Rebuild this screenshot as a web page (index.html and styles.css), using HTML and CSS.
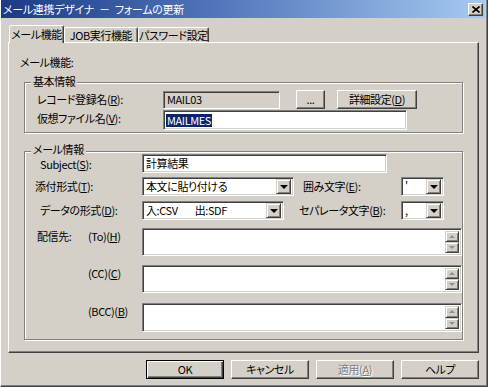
FILE: index.html
```html
<!DOCTYPE html>
<html lang="ja">
<head>
<meta charset="utf-8">
<title>メール連携デザイナ － フォームの更新</title>
<link rel="stylesheet" href="styles.css">
</head>
<body>
<div class="window">
  <div class="titlebar">
    <span class="title">メール連携デザイナ － フォームの更新</span>
    <span class="close"><svg width="8" height="7" viewBox="0 0 8 7"><path d="M0.5 0.5 L7.5 6.5 M7.5 0.5 L0.5 6.5" stroke="#000" stroke-width="1.6"/></svg></span>
  </div>

  <div class="tabs">
    <div class="tab active">メール機能</div>
    <div class="tab t2">JOB実行機能</div>
    <div class="tab t3">パスワード設定</div>
  </div>

  <div class="panel">
    <div class="caption">メール機能:</div>

    <div class="group g1">
      <span class="legend">基本情報</span>
      <div class="row r-rec">
        <span class="label l1">レコード登録名(<u>R</u>):</span>
        <div class="field disabled w-rec">MAIL03</div>
        <button class="btn b-dots">...</button>
        <button class="btn b-detail">詳細設定(<u>D</u>)</button>
      </div>
      <div class="row r-file">
        <span class="label l1">仮想ファイル名(<u>V</u>):</span>
        <div class="field w-file"><span class="sel">MAILMES</span></div>
      </div>
    </div>

    <div class="group g2">
      <span class="legend">メール情報</span>
      <div class="row r-subj">
        <span class="label l2 in3">Subject(<u>S</u>):</span>
        <div class="field w-subj">計算結果</div>
      </div>
      <div class="row r-att">
        <span class="label l2 out2">添付形式(<u>T</u>):</span>
        <div class="select w-att"><span class="val">本文に貼り付ける</span><span class="drop"></span></div>
        <span class="label l-enc">囲み文字(<u>E</u>):</span>
        <div class="select w-small"><span class="val">'</span><span class="drop"></span></div>
      </div>
      <div class="row r-data">
        <span class="label l2 in3">データの形式(<u>D</u>):</span>
        <div class="select w-data"><span class="val">入:CSV<span class="gap">出:SDF</span></span><span class="drop"></span></div>
        <span class="label l-sep">セパレータ文字(<u>B</u>):</span>
        <div class="select w-small"><span class="val">,</span><span class="drop"></span></div>
      </div>
      <div class="row trow ta1">
        <span class="label l-to1">配信先:</span>
        <span class="label l-to2">(To)(<u>H</u>)</span>
        <div class="textarea"><div class="sb"><span class="sbtn up"></span><span class="sbtn down"></span></div></div>
      </div>
      <div class="row trow ta2">
        <span class="label l-to1"></span>
        <span class="label l-to2">(CC)(<u>C</u>)</span>
        <div class="textarea"><div class="sb"><span class="sbtn up"></span><span class="sbtn down"></span></div></div>
      </div>
      <div class="row trow ta3">
        <span class="label l-to1"></span>
        <span class="label l-to2">(BCC)(<u>B</u>)</span>
        <div class="textarea"><div class="sb"><span class="sbtn up"></span><span class="sbtn down"></span></div></div>
      </div>
    </div>
  </div>

  <div class="buttons">
    <button class="btn dlg default">OK</button>
    <button class="btn dlg">キャンセル</button>
    <button class="btn dlg disabled-btn">適用(<u>A</u>)</button>
    <button class="btn dlg">ヘルプ</button>
  </div>
</div>
</body>
</html>
```

FILE: styles.css
```css
* { box-sizing: border-box; margin: 0; padding: 0; }
html, body { width: 488px; height: 387px; overflow: hidden; }
body {
  background: #D4D0C8;
  font-family: "Noto Sans CJK JP", "Noto Sans", sans-serif;
  font-size: 11px;
  line-height: 13px;
  color: #000;
  font-feature-settings: "palt" 1;
  letter-spacing: -0.4px;
}
u { text-decoration: underline; text-underline-offset: 1px; }

.window {
  width: 488px;
  height: 387px;
  display: flex;
  flex-direction: column;
  border-left: 1px solid #fff;
  border-right: 1px solid #404040;
  border-bottom: 1px solid #404040;
  box-shadow: inset -1px -1px 0 #808080;
  padding-right: 2px;
}

.titlebar {
  height: 18px;
  flex: none;
  display: flex;
  align-items: center;
  justify-content: space-between;
  padding: 0 2px;
  background: linear-gradient(to right, #1a3a86 0%, #5276bb 45%, #a6caf0 100%);
  color: #fff;
}
.title { font-size: 11px; line-height: 13px; letter-spacing: -0.3px; word-spacing: 3px; white-space: pre; }
.close {
  width: 15px;
  height: 13px;
  background: #D4D0C8;
  border: 1px solid;
  border-color: #fff #404040 #404040 #fff;
  box-shadow: inset -1px -1px 0 #808080;
  display: flex;
  align-items: center;
  justify-content: center;
}

/* tabs */
.tabs {
  margin-top: 7px;
  margin-left: 8px;
  height: 17px;
  display: flex;
  align-items: flex-end;
  flex: none;
  position: relative;
  z-index: 1;
}
.tab {
  height: 15px;
  border: 1px solid;
  border-bottom: none;
  border-color: #fff #404040 transparent #fff;
  box-shadow: inset -1px 0 0 #808080;
  border-radius: 2px 2px 0 0;
  display: flex;
  align-items: center;
  justify-content: center;
  background: #D4D0C8;
  white-space: nowrap;
  padding-top: 1px;
}
.tab.active { width: 55px; height: 18px; margin-bottom: -1px; padding-top: 0; }
.tab.t2 { width: 74px; }
.tab.t3 { width: 71px; }

.panel {
  margin-left: 7px;
  width: 471px;
  height: 311px;
  flex: none;
  border: 1px solid;
  border-color: #fff #404040 #404040 #fff;
  box-shadow: inset -1px -1px 0 #808080;
}
.caption { margin: 13px 0 0 11px; }

.group {
  position: relative;
  margin-left: 15px;
  width: 439px;
  border: 1px solid #808080;
  box-shadow: inset 1px 1px 0 #fff, 1px 1px 0 #fff;
  padding-left: 12px;
}
.legend {
  position: absolute;
  top: -7px;
  left: 6px;
  padding: 0 2px;
  line-height: 11px;
  background: #D4D0C8;
}
.g2 .legend { top: -8px; }
.g1 { margin-top: 13px; height: 51px; padding-top: 7px; }
.g2 { margin-top: 18px; height: 189px; padding-top: 1px; }

.row { display: flex; align-items: center; }
.label { flex: none; white-space: nowrap; }
.l1 { width: 126px; }
.l2 { width: 105px; }
.in3 { padding-left: 3px; }
.out2 { margin-left: -2px; width: 107px; }

.r-rec { height: 19px; }
.r-file { height: 20px; margin-top: 1px; }
.r-file .label { margin-top: -3px; }
.r-subj { height: 19px; margin-top: 1px; }
.r-subj .label { line-height: 11px; margin-top: 2px; }
.r-att { height: 19px; margin-top: 4px; }
.r-data { height: 19px; margin-top: 5px; }
.trow { align-items: flex-start; }
.ta1 { height: 28px; margin-top: 8px; }
.ta2 { height: 28px; margin-top: 9px; }
.ta3 { height: 29px; margin-top: 10px; }
.trow .label { padding-top: 2px; }
.l-to1 { width: 51px; }
.l-to2 { width: 54px; }

/* sunken fields */
.field, .select, .textarea {
  background: #fff;
  border: 1px solid;
  border-color: #808080 #fff #fff #808080;
  box-shadow: inset 1px 1px 0 #404040, inset -1px -1px 0 #D4D0C8;
  height: 100%;
  flex: none;
}
.field { padding: 0 3px; display: flex; align-items: center; white-space: nowrap; }
.field.disabled { background: #D4D0C8; }
.w-rec { width: 117px; height: 18px; }
.w-file { width: 244px; padding-left: 2px; }
.w-subj { width: 245px; }
.sel { background: #0A246A; color: #fff; padding: 0 1px; line-height: 13px; }

.select { display: flex; align-items: center; padding: 2px; }
.select .val { flex: 1; padding-left: 1px; white-space: nowrap; }
.gap { margin-left: 17px; }
.w-att { width: 152px; }
.w-data { width: 142px; }
.w-small { width: 43px; }
.l-enc { margin-left: 9px; width: 98px; }
.l-sep { margin-left: 15px; width: 102px; }
.drop {
  flex: none;
  width: 15px;
  height: 15px;
  background: #D4D0C8;
  border: 1px solid;
  border-color: #D4D0C8 #404040 #404040 #D4D0C8;
  box-shadow: inset 1px 1px 0 #fff, inset -1px -1px 0 #808080;
  display: flex;
  align-items: center;
  justify-content: center;
}
.drop::after {
  content: "";
  border-top: 4px solid #000;
  border-left: 4px solid transparent;
  border-right: 4px solid transparent;
  margin-top: 1px;
}

.textarea { width: 320px; display: flex; justify-content: flex-end; padding: 2px; }
.sb { width: 14px; display: flex; flex-direction: column; }
.sbtn {
  flex: 1;
  background: #D4D0C8;
  border: 1px solid;
  border-color: #D4D0C8 #404040 #404040 #D4D0C8;
  box-shadow: inset 1px 1px 0 #fff, inset -1px -1px 0 #808080;
  display: flex;
  align-items: center;
  justify-content: center;
}
.sbtn.up::after {
  content: "";
  border-bottom: 3px solid #909090;
  border-left: 3px solid transparent;
  border-right: 3px solid transparent;
}
.sbtn.down::after {
  content: "";
  border-top: 3px solid #909090;
  border-left: 3px solid transparent;
  border-right: 3px solid transparent;
}

/* buttons */
.btn {
  background: #D4D0C8;
  border: 1px solid;
  border-color: #fff #404040 #404040 #fff;
  box-shadow: inset -1px -1px 0 #808080;
  font: inherit;
  font-feature-settings: "palt" 1;
  letter-spacing: -0.4px;
  color: #000;
  height: 19px;
  flex: none;
  white-space: nowrap;
}
.b-dots { width: 29px; margin-left: 16px; }
.b-detail { width: 80px; margin-left: 12px; }

.buttons {
  margin-top: 7px;
  display: flex;
  justify-content: flex-end;
  gap: 7px;
  padding-right: 6px;
}
.dlg { width: 78px; }
.btn.default {
  border-color: #000;
  box-shadow: inset 1px 1px 0 #fff, inset -1px -1px 0 #404040, inset -2px -2px 0 #808080;
}
.disabled-btn { color: #808080; text-shadow: 1px 1px 0 #fff; }
```
